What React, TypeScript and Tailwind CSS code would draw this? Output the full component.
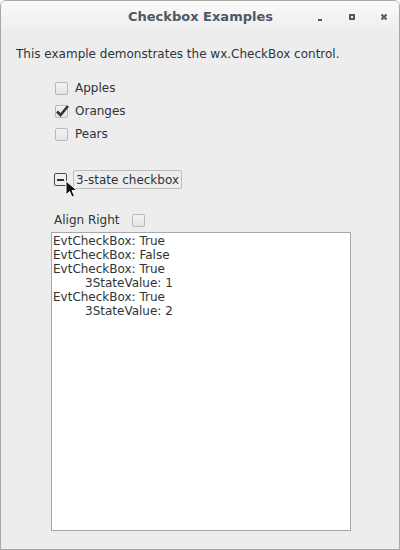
import React from 'react';

const font = { fontFamily: '"DejaVu Sans", sans-serif' };

function Box({ checked }: { checked?: boolean }) {
  return (
    <span className="block relative w-[13px] h-[13px] rounded-[2px] border border-[#b8b8b8] bg-gradient-to-b from-[#f4f4f4] to-[#e4e4e4] shrink-0">
      {checked && (
        <svg className="absolute left-[-1px] top-[-3px]" width="16" height="16" viewBox="0 0 16 16">
          <path d="M2 8.5 L5.5 12 L13 3" fill="none" stroke="#2e3436" strokeWidth="2.6" />
        </svg>
      )}
    </span>
  );
}

export default function App() {
  const log = [
    ['EvtCheckBox: True', false],
    ['EvtCheckBox: False', false],
    ['EvtCheckBox: True', false],
    ['3StateValue: 1', true],
    ['EvtCheckBox: True', false],
    ['3StateValue: 2', true],
  ] as const;

  return (
    <div className="w-[400px] h-[550px] bg-white" style={font}>
      <div className="w-full h-full flex flex-col border border-[#a6a6a6] rounded-t-[6px] bg-[#ededed] overflow-hidden">
        {/* title bar */}
        <div className="h-[32px] shrink-0 relative flex items-center justify-center bg-gradient-to-b from-[#fafafa] to-[#ededed]">
          <span className="text-[13px] font-bold text-[#4c5966] ml-[1px]">Checkbox Examples</span>
          <div className="absolute right-0 top-0 h-full flex items-center">
            <span className="w-[4px] h-[2px] bg-[#4c5966] mt-[5px] mr-[27px]" />
            <span className="w-[6px] h-[6px] border-2 border-[#4c5966] mr-[26px]" />
            <svg width="6" height="6" viewBox="0 0 6 6" className="mr-[12px]">
              <path d="M0.5 0.5 L5.5 5.5 M5.5 0.5 L0.5 5.5" stroke="#4c5966" strokeWidth="2" />
            </svg>
          </div>
        </div>

        <div className="flex-1 flex flex-col pl-[15px] pt-[13px] text-[12px] text-[#2e3436]">
          <div className="leading-[16px]">This example demonstrates the wx.CheckBox control.</div>

          <div className="flex flex-col gap-[7px] mt-[18px] pl-[39px]">
            {[
              ['Apples', false],
              ['Oranges', true],
              ['Pears', false],
            ].map(([label, checked]) => (
              <div key={label as string} className="flex items-center gap-[7px] h-[16px]">
                <Box checked={checked as boolean} />
                <span>{label as string}</span>
              </div>
            ))}
          </div>

          <div className="relative flex items-center mt-[28px] ml-[38px] h-[19px]">
            <span className="w-[13px] h-[13px] rounded-[2px] border border-[#4a4a4a] bg-[#f0f0f0] flex items-center justify-center shrink-0">
              <span className="w-[7px] h-[2px] bg-[#2e3436]" />
            </span>
            <span className="ml-[6px] px-[2px] h-[19px] flex items-center border border-[#bdbdbd] rounded-[2px]">3-state checkbox</span>
            <svg className="absolute left-[11px] top-[10px]" width="14" height="20" viewBox="0 0 14 20">
              <path d="M1 1 L1 15 L4.5 11.5 L7 17 L9.5 16 L7 10.5 L12 10.5 Z" fill="#111" stroke="#fff" strokeWidth="1" />
            </svg>
          </div>

          <div className="flex items-center mt-[23px] ml-[38px] h-[16px]">
            <span>Align Right</span>
            <span className="ml-[12px]"><Box /></span>
          </div>

          <div className="mt-[4px] ml-[35px] w-[300px] h-[299px] bg-white border border-[#a8a8a8] px-[1px] pt-[1px] leading-[14px] text-[12px]">
            {log.map(([t, indent], i) => (
              <div key={i} className={indent ? 'pl-[32px]' : ''}>{t}</div>
            ))}
          </div>
        </div>
      </div>
    </div>
  );
}
